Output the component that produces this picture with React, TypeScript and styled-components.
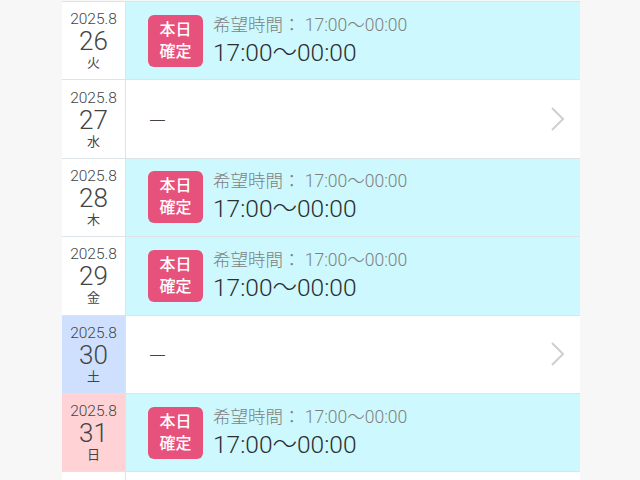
import styled, { createGlobalStyle } from 'styled-components';

const GlobalStyle = createGlobalStyle`
  html, body {
    margin: 0;
    padding: 0;
    background: #f7f7f7;
    font-family: Roboto, "Noto Sans CJK JP", sans-serif;
  }
`;

const Page = styled.div`
  display: flex;
  justify-content: center;
  padding-top: 1px;
`;

const List = styled.div`
  width: 518px;
  margin-left: 2px;
  background: #fff;
  border-top: 1px solid #dde3e6;
`;

const Row = styled.div`
  display: flex;
  height: 77.4px;
  border-bottom: 1px solid #dde3e6;
`;

const DateCell = styled.div<{ $tone: 'normal' | 'sat' | 'sun' }>`
  width: 63px;
  flex-shrink: 0;
  border-right: 1px solid #dde3e6;
  display: flex;
  flex-direction: column;
  align-items: center;
  justify-content: center;
  color: #444;
  background: ${({ $tone }) =>
    $tone === 'sat' ? '#cfe0fe' : $tone === 'sun' ? '#ffd3d5' : '#fff'};
`;

const Month = styled.div`
  font-size: 15.5px;
  line-height: 16px;
  font-weight: 300;
`;

const Day = styled.div`
  font-size: 26px;
  line-height: 28px;
  font-weight: 300;
`;

const Weekday = styled.div`
  font-size: 13px;
  line-height: 15px;
`;

const Body = styled.div<{ $confirmed: boolean }>`
  flex: 1;
  display: flex;
  align-items: center;
  padding-left: 22px;
  padding-right: 14px;
  background: ${({ $confirmed }) => ($confirmed ? '#cdf8fd' : '#fff')};
`;

const Badge = styled.div`
  width: 55px;
  height: 52px;
  border-radius: 6px;
  background: #e6527b;
  color: #fff;
  font-size: 16px;
  line-height: 22px;
  font-weight: 500;
  display: flex;
  flex-direction: column;
  align-items: center;
  justify-content: center;
  flex-shrink: 0;
`;

const Times = styled.div`
  margin-left: 10px;
  display: flex;
  flex-direction: column;
`;

const Wish = styled.div`
  font-size: 17.5px;
  line-height: 24px;
  font-weight: 300;
  color: #7f7f7f;
`;

const Fixed = styled.div`
  font-size: 24.5px;
  line-height: 32px;
  font-weight: 300;
  color: #2e2e2e;
`;

const Dash = styled.div`
  flex: 1;
  font-size: 19px;
  font-weight: 300;
  color: #444;
`;

const Chevron = () => (
  <svg width="16" height="26" viewBox="0 0 16 26">
    <path d="M2 2 L13 13 L2 24" fill="none" stroke="#cfcfcf" strokeWidth="2" />
  </svg>
);

type Entry = {
  day: number;
  weekday: string;
  tone: 'normal' | 'sat' | 'sun';
  confirmed: boolean;
};

const entries: Entry[] = [
  { day: 26, weekday: '火', tone: 'normal', confirmed: true },
  { day: 27, weekday: '水', tone: 'normal', confirmed: false },
  { day: 28, weekday: '木', tone: 'normal', confirmed: true },
  { day: 29, weekday: '金', tone: 'normal', confirmed: true },
  { day: 30, weekday: '土', tone: 'sat', confirmed: false },
  { day: 31, weekday: '日', tone: 'sun', confirmed: true },
];

const App = () => (
  <>
    <GlobalStyle />
    <Page>
      <List>
        {entries.map((e) => (
          <Row key={e.day}>
            <DateCell $tone={e.tone}>
              <Month>2025.8</Month>
              <Day>{e.day}</Day>
              <Weekday>{e.weekday}</Weekday>
            </DateCell>
            <Body $confirmed={e.confirmed}>
              {e.confirmed ? (
                <>
                  <Badge>
                    <span>本日</span>
                    <span>確定</span>
                  </Badge>
                  <Times>
                    <Wish>希望時間：&nbsp;17:00〜00:00</Wish>
                    <Fixed>17:00〜00:00</Fixed>
                  </Times>
                </>
              ) : (
                <>
                  <Dash>ー</Dash>
                  <Chevron />
                </>
              )}
            </Body>
          </Row>
        ))}
        <Row>
          <DateCell $tone="normal" />
          <Body $confirmed={false} />
        </Row>
      </List>
    </Page>
  </>
);

export default App;
